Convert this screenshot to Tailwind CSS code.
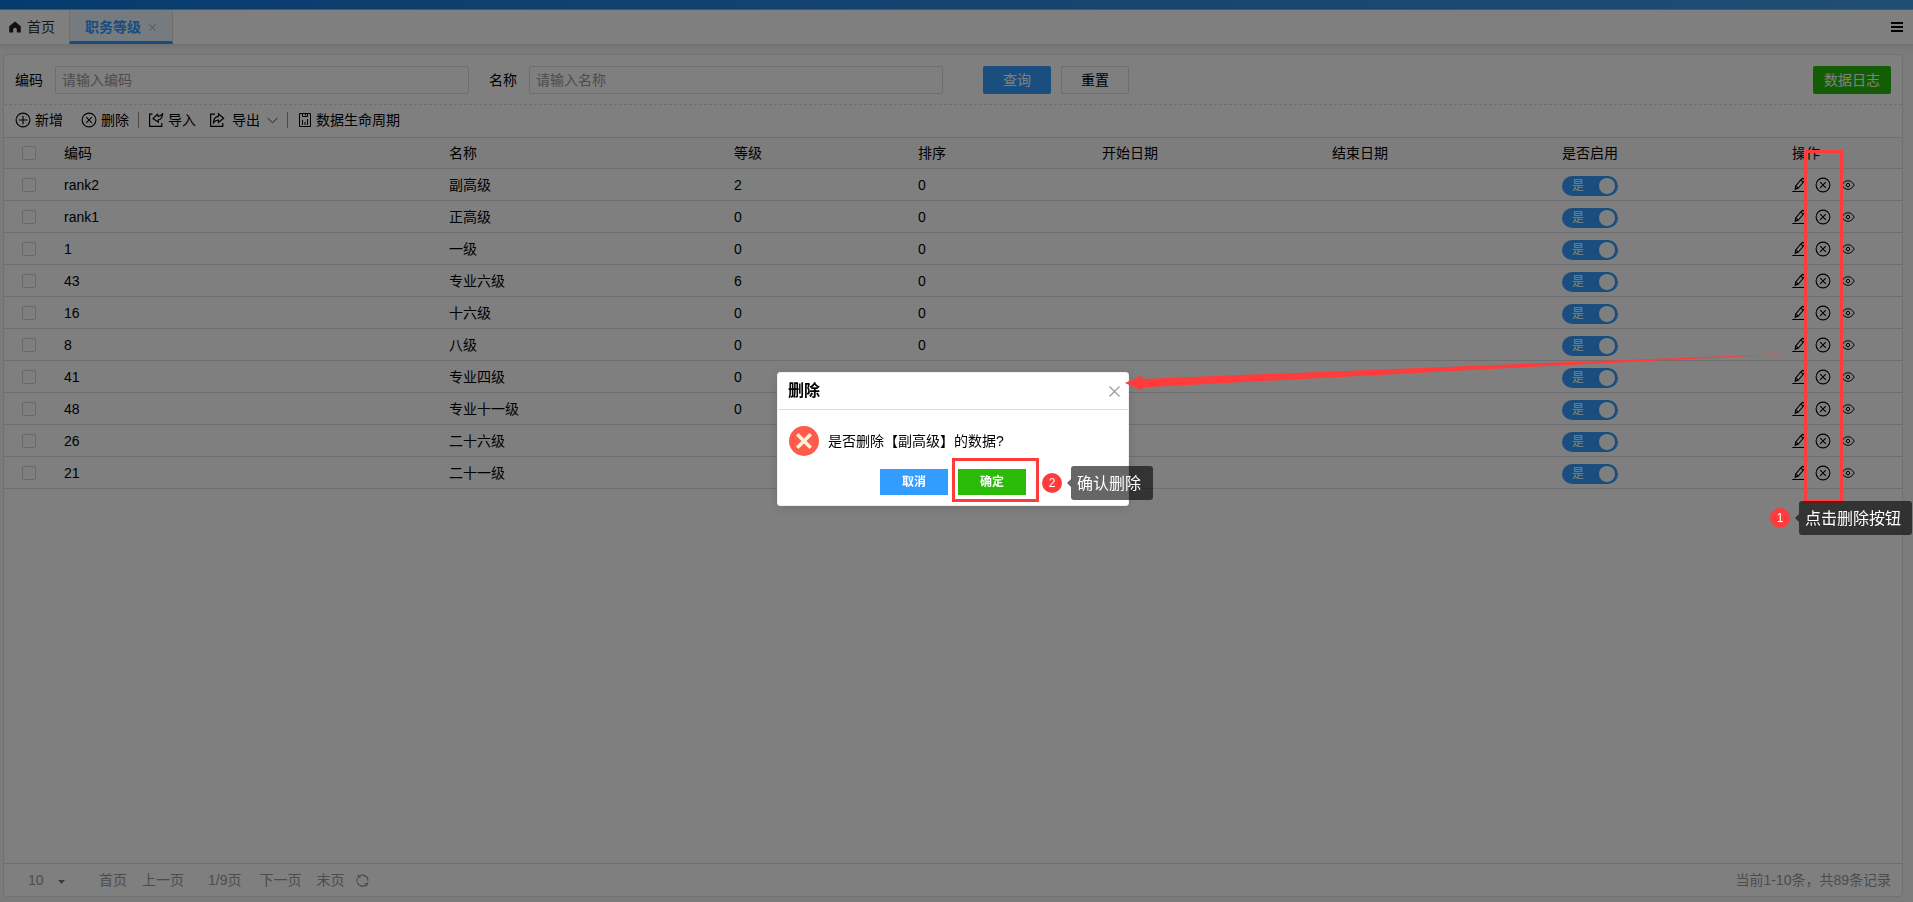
<!DOCTYPE html>
<html lang="zh-CN">
<head>
<meta charset="utf-8">
<title>职务等级</title>
<script src="https://cdn.jsdelivr.net/npm/@tailwindcss/browser@4"></script>
</head>
<body class="h-screen overflow-hidden bg-[#f6f6f6] font-['Liberation_Sans','Noto_Sans_CJK_SC',sans-serif] text-sm text-black">
<svg class="hidden" aria-hidden="true">
  <symbol id="i-del" viewBox="0 0 16 16"><g fill="none" stroke="currentColor" stroke-width="1.1"><circle cx="8" cy="8" r="6.9"/><path d="M5.2 5.2l5.6 5.6M10.8 5.2l-5.6 5.6"/></g></symbol>
  <symbol id="i-add" viewBox="0 0 16 16"><g fill="none" stroke="currentColor" stroke-width="1.1"><circle cx="8" cy="8" r="6.9"/><path d="M8 3.8v8.4M3.8 8h8.4"/></g></symbol>
  <symbol id="i-edit" viewBox="0 0 14 16"><g fill="none" stroke="currentColor" stroke-width="1.1"><path d="M3.2 12.3l.5-3.4 6-7c.5-.6 1.1-.6 1.6-.2l.9.8c.5.4.5 1 .1 1.5l-6 7z"/><path d="M8.800 3l2.600 2.200M3.700 8.900l2.500 2.100"/><path d="M.3 14.500h13.200" stroke-width="1"/></g></symbol>
  <symbol id="i-eye" viewBox="0 0 14 12"><g fill="none" stroke="currentColor" stroke-width="1"><path d="M.8 6C2.400 3.200 4.500 1.700 7 1.700S11.600 3.200 13.200 6C11.600 8.800 9.500 10.300 7 10.300S2.400 8.800.8 6z"/><circle cx="7" cy="6" r="1.700"/></g></symbol>
</svg>

<div class="flex h-full flex-col">
  <div class="h-[10px] shrink-0 border-b border-[#8abbe8] bg-linear-to-r from-[#0a78dc] via-[#2a88e0] to-[#429be8]"></div>
  <nav class="z-10 flex h-[35px] shrink-0 items-stretch border-b border-[#e4e4e4] bg-white shadow-[0_1px_6px_rgba(0,0,0,0.1)]">
    <a href="#" class="flex w-[69px] items-center gap-[6px] pl-[9px] text-[#333]">
      <svg class="size-3" viewBox="0 0 12 12"><path fill="#222" d="M6 .5L.2 5.200V11.500H4.200V8.600a1.800 1.800 0 0 1 3.600 0V11.500H11.800V5.200z"/></svg>
      首页</a>
    <div class="flex items-center gap-2 border-x border-b-[3px] border-x-[#ddd] border-b-[#3399ff] bg-[#ebf6fd] pr-4 pl-[15px] pt-[3px] text-[#3399ff]">
      <a href="#" class="font-bold">职务等级</a>
      <button aria-label="关闭"><svg class="size-[7px]" viewBox="0 0 7 7"><path d="M.5.5l6 6M6.500.5l-6 6" stroke="#73a9e8" fill="none"/></svg></button>
    </div>
    <button class="mr-[10px] ml-auto" aria-label="菜单"><svg class="h-[10px] w-3" viewBox="0 0 12 10"><path d="M0 1h12M0 5h12M0 9h12" stroke="#000" stroke-width="2"/></svg></button>
  </nav>

  <main class="mt-[9px] mr-[10px] mb-[5px] ml-[3px] flex min-h-0 flex-1 flex-col rounded border border-[#e2e2e2] bg-white">
    <form class="flex h-[50px] shrink-0 items-center border-b border-dashed border-[#ddd] pr-[11px] pl-[11px]" onsubmit="return false">
      <label for="code" class="w-10">编码</label>
      <input id="code" placeholder="请输入编码" class="h-7 w-[414px] rounded-xs border border-[#ddd] px-[6px] placeholder:text-[#999]">
      <label for="name" class="ml-5 w-10">名称</label>
      <input id="name" placeholder="请输入名称" class="h-7 w-[414px] rounded-xs border border-[#ddd] px-[6px] placeholder:text-[#999]">
      <button class="ml-10 h-7 w-[68px] rounded-xs bg-[#339cff] text-white">查询</button>
      <button class="ml-[10px] h-7 w-[68px] rounded-xs border border-[#ddd]">重置</button>
      <button class="ml-auto h-7 w-[78px] rounded-xs bg-[#29bb08] text-white">数据日志</button>
    </form>

    <div class="flex h-8 shrink-0 items-center pb-[2px] pl-[11px]">
      <button class="flex items-center gap-1"><svg class="size-4"><use href="#i-add"/></svg>新增</button>
      <button class="ml-[18px] flex items-center gap-1"><svg class="size-4"><use href="#i-del"/></svg>删除</button>
      <span class="ml-[9px] h-4 w-px bg-[#999]"></span>
      <button class="ml-[9px] flex items-center gap-1"><svg class="size-4" viewBox="0 0 16 16" fill="none" stroke="#000" stroke-width="1.2"><path d="M4.500 2.200H1.600v12.200h12.200V11"/><path d="M14.800 1.300c-1.300 2-2.600 2.900-4.600 3.100L9.400 2.300 5 6.600l5.400 3.600-.1-2.200c2.600-.4 4.200-2.700 4.500-6.700z"/></svg>导入</button>
      <button class="ml-[13px] flex items-center"><svg class="mr-[7px] size-4" viewBox="0 0 16 16" fill="none" stroke="#000" stroke-width="1.2"><path d="M6 2.200H1.600v12.200h12.200V11"/><path d="M4.500 10.600c.2-4 2.200-6.100 5-6.300V1.900l5.100 4.400-5.100 4.200V8.100c-2.200 0-3.700.8-5 2.500z"/></svg>导出
        <svg class="ml-[7px] h-[7px] w-[11px]" viewBox="0 0 11 7"><path d="M.5.8l5 5 5-5" stroke="#444" fill="none"/></svg></button>
      <span class="ml-[9px] h-4 w-px bg-[#999]"></span>
      <button class="ml-[11px] flex items-center gap-[5px]"><svg class="h-[14px] w-3" viewBox="0 0 12 14" fill="none" stroke="#000" stroke-width="1"><path d="M.5.5h11v13H.5z"/><path d="M3.500.5v3h5v-3M6.500.5v2M3.500 12V7M6 12V9M8.500 12V6"/></svg>数据生命周期</button>
    </div>

    <div class="min-h-0 flex-1">
      <table class="w-full table-fixed border-collapse text-left">
        <colgroup><col class="w-[50px]"><col class="w-[385px]"><col class="w-[285px]"><col class="w-[184px]"><col class="w-[184px]"><col class="w-[230px]"><col class="w-[230px]"><col class="w-[230px]"><col class="w-[120px]"></colgroup>
        <thead>
          <tr class="h-[31px] border-y border-[#ddd] bg-[#fafafa] *:px-[10px] *:font-normal">
            <th><input type="checkbox" aria-label="全选" class="ml-2 block size-[14px] appearance-none rounded-xs border border-[#d2d2d2] bg-white"></th>
            <th>编码</th><th>名称</th><th>等级</th><th>排序</th><th>开始日期</th><th>结束日期</th><th>是否启用</th><th>操作</th>
          </tr>
        </thead>
        <tbody id="rows"></tbody>
      </table>
    </div>

    <footer class="flex h-[33px] shrink-0 items-center border-t border-[#ddd] px-[11px] text-[#999]">
      <label class="flex items-center pl-[13px]"><select aria-label="每页条数" class="w-[30px] appearance-none"><option>10</option></select>
        <svg class="mt-1 h-1 w-[7px]" viewBox="0 0 7 4"><path d="M0 0h7L3.500 4z" fill="#777"/></svg></label>
      <a href="#" class="ml-[34px]">首页</a>
      <a href="#" class="ml-[15px]">上一页</a>
      <span class="ml-6">1/9页</span>
      <a href="#" class="ml-[18px]">下一页</a>
      <a href="#" class="ml-[15px]">末页</a>
      <button class="ml-3" aria-label="刷新"><svg class="size-[13px]" viewBox="0 0 13 13" fill="none" stroke="#888" stroke-width="1.100"><path d="M1 7.500V6.500A5.500 5.500 0 0 1 1.300 4.500M3 2.300A5.500 5.500 0 0 1 11.900 5.500V7M12 8.400A5.500 5.500 0 0 1 11 9.900M9.800 11A5.500 5.500 0 0 1 1.300 8.500"/><path d="M2.200 .8v2.400h2.400M10.800 12.200V9.800H8.400"/></svg></button>
      <span class="ml-auto">当前1-10条，共89条记录</span>
    </footer>
  </main>
</div>

<div class="fixed inset-0 z-20 bg-black/50"></div>

<div role="dialog" aria-labelledby="dlg-title" class="fixed top-[372px] left-[777px] z-30 w-[352px] rounded-[3px] border border-[#eef0f6] bg-white shadow-[0_2px_12px_rgba(0,0,0,0.12)]">
  <div class="flex h-[37px] items-center justify-between border-b border-[#ddd] pr-2 pl-[10px]">
    <h2 id="dlg-title" class="text-base font-bold">删除</h2>
    <button aria-label="关闭"><svg class="size-[11px]" viewBox="0 0 11 11"><path d="M.5.5l10 10M10.500.5l-10 10" stroke="#999" stroke-width="1.200"/></svg></button>
  </div>
  <div class="flex h-[59px] items-center gap-[9px] pt-[3px] pl-[11px]">
    <svg class="size-[30px]" viewBox="0 0 30 30"><circle cx="15" cy="15" r="15" fill="#fe5b4b"/><path d="M9.500 9.500l11 11M20.500 9.500l-11 11" stroke="#fff0d6" stroke-width="3.600" stroke-linecap="square"/></svg>
    <p>是否删除【副高级】的数据?</p>
  </div>
  <div class="flex h-9 items-start justify-end gap-[10px] pr-[102px] text-xs font-bold text-white">
    <button class="h-[26px] w-[68px] bg-[#339cff]">取消</button>
    <button class="h-[26px] w-[68px] bg-[#29bb08]">确定</button>
  </div>
</div>

<div class="fixed top-[458px] left-[952px] z-40 h-11 w-[87px] border-[3px] border-[#ff3b3b]"></div>
<div class="fixed top-[150px] left-[1804px] z-40 h-[353px] w-[39px] border-[3px] border-[#ff3b3b]"></div>
<svg class="fixed top-[350px] left-[1120px] z-40 h-[50px] w-[680px]" viewBox="0 0 680 50"><path d="M5 33l17.500-8-.5 4L400 14 670 4 400 17.500 22 37.500l.5 3.500z" fill="#ff3b3b"/></svg>

<div class="fixed top-[466px] left-[1042px] z-40 flex items-center">
  <span class="flex size-5 items-center justify-center rounded-full bg-[#ff3b3b] text-xs text-white">2</span>
  <span class="ml-[5px] border-y-4 border-r-4 border-y-transparent border-r-black/60"></span>
  <span class="flex h-[34px] w-[82px] items-center rounded-[3px] bg-black/60 pt-px pl-[6px] text-base whitespace-nowrap text-white">确认删除</span>
</div>
<div class="fixed top-[501px] left-[1770px] z-40 flex items-center">
  <span class="flex size-5 items-center justify-center rounded-full bg-[#ff3b3b] text-xs text-white">1</span>
  <span class="ml-[5px] border-y-4 border-r-4 border-y-transparent border-r-black/60"></span>
  <span class="flex h-[34px] w-[113px] items-center rounded-[3px] bg-black/60 pt-px pl-[6px] text-base whitespace-nowrap text-white">点击删除按钮</span>
</div>

<script>
const data = [
  ['rank2', '副高级', '2', '0'], ['rank1', '正高级', '0', '0'], ['1', '一级', '0', '0'],
  ['43', '专业六级', '6', '0'], ['16', '十六级', '0', '0'], ['8', '八级', '0', '0'],
  ['41', '专业四级', '0', ''], ['48', '专业十一级', '0', ''], ['26', '二十六级', '', ''], ['21', '二十一级', '', ''],
];
document.getElementById('rows').innerHTML = data.map(([code, name, level, sort]) => `
  <tr class="h-8 border-b border-[#ddd] *:px-[10px]">
    <td><input type="checkbox" aria-label="选择${name}" class="ml-2 block size-[14px] appearance-none rounded-xs border border-[#d2d2d2] bg-white"></td>
    <td>${code}</td><td>${name}</td><td>${level}</td><td>${sort}</td><td></td><td></td>
    <td><button role="switch" aria-checked="true" aria-label="是否启用${name}" class="mt-[2px] flex h-5 w-14 items-center justify-between rounded-full bg-[#339cff] pr-[3px] pl-[10px] text-xs text-white">是<span class="size-4 rounded-full bg-white"></span></button></td>
    <td><div class="flex items-center">
      <button aria-label="编辑"><svg class="h-4 w-[14px]"><use href="#i-edit"/></svg></button>
      <button class="ml-[9px]" aria-label="删除"><svg class="size-4"><use href="#i-del"/></svg></button>
      <button class="ml-[10px]" aria-label="查看"><svg class="h-3 w-[14px]"><use href="#i-eye"/></svg></button>
    </div></td>
  </tr>`).join('');
</script>
</body>
</html>
